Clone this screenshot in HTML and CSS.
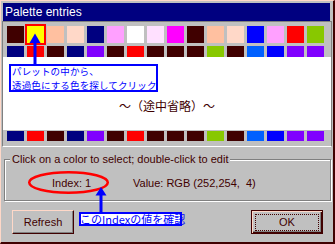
FILE: index.html
```html
<!DOCTYPE html>
<html lang="ja">
<head>
    <meta charset="UTF-8">
    <meta name="viewport" content="width=device-width, initial-scale=1.0">
    <title>Palette entries</title>
    <link rel="stylesheet" href="styles.css">
</head>
<body>
    <div class="window">
        <div class="title">Palette entries</div>

        <div class="palette">
            <div class="row">
                <i class="sw mr"></i><i class="sw ye"></i><i class="sw pc"></i><i class="sw lp"></i>
                <i class="sw nv"></i><i class="sw pk"></i><i class="sw wh"></i><i class="sw lk"></i>
                <i class="sw mg"></i><i class="sw mr"></i><i class="sw pc"></i><i class="sw lp"></i>
                <i class="sw bl"></i><i class="sw pk"></i><i class="sw rd"></i><i class="sw gr"></i>
            </div>
            <div class="row cut-top">
                <i class="sw nv"></i><i class="sw rd"></i><i class="sw mr"></i><i class="sw nv"></i>
                <i class="sw pu"></i><i class="sw mr"></i><i class="sw rd"></i><i class="sw mr"></i>
                <i class="sw mr"></i><i class="sw mr"></i><i class="sw gr"></i><i class="sw mr"></i>
                <i class="sw az"></i><i class="sw bl"></i><i class="sw pu"></i><i class="sw pu"></i>
            </div>
            <!-- 途中の行は省略 -->
            <div class="omitted">～（途中省略）～</div>
            <div class="row cut-bottom">
                <i class="sw nv"></i><i class="sw rd"></i><i class="sw mr"></i><i class="sw nv"></i>
                <i class="sw pu"></i><i class="sw mr"></i><i class="sw rd"></i><i class="sw mr"></i>
                <i class="sw mr"></i><i class="sw mr"></i><i class="sw gr"></i><i class="sw mr"></i>
                <i class="sw az"></i><i class="sw bl"></i><i class="sw pu"></i><i class="sw pu"></i>
            </div>
        </div>

        <div class="group">
            <span class="legend">Click on a color to select; double-click to edit</span>
            <div class="info">
                <span class="index">Index: 1</span>
                <span class="value">Value: RGB (252,254,  4)</span>
            </div>
        </div>

        <div class="buttons">
            <button class="btn">Refresh</button>
            <button class="btn btn-default"><span class="focus">OK</span></button>
        </div>

        <!-- 注釈 -->
        <div class="note note-pick">
            <div class="note-line">パレットの中から、</div>
            <div class="note-line">透過色にする色を探してクリック</div>
        </div>
        <div class="note note-index">このIndexの値を確認</div>

        <svg class="marks" width="335" height="244" viewBox="0 0 335 244">
            <rect x="26" y="25" width="19" height="19" fill="none" stroke="#ff0000" stroke-width="2"/>
            <rect x="33.5" y="42" width="3" height="23" fill="#0000ff"/>
            <polygon points="29.5,43 40.5,43 35,33.5" fill="#0000ff"/>
            <ellipse cx="68.5" cy="182.5" rx="39.3" ry="10.3" fill="none" stroke="#ff0000" stroke-width="2.5"/>
            <rect x="99.5" y="194" width="3" height="19" fill="#0000ff"/>
            <polygon points="95.5,195.5 106.5,195.5 101,187" fill="#0000ff"/>
        </svg>
    </div>
</body>
</html>
```

FILE: styles.css
```css
body {
    margin: 0;
    padding: 0;
}

.window {
    position: relative;
    width: 335px;
    height: 244px;
    box-sizing: border-box;
    background-color: #c0c0c0;
    border-top: 1px solid #ffd8c8;
    border-left: 1px solid #ffd8c8;
    border-right: 2px solid #400000;
    border-bottom: 2px solid #400000;
    padding: 2px 1px 0 1px;
    font-family: "Liberation Sans", Arial, sans-serif;
    font-size: 11px;
    color: #400000;
}

.title {
    height: 18px;
    line-height: 18px;
    margin: 0 2px 0 1px;
    padding-left: 2px;
    background-color: #000080;
    color: white;
    font-size: 12px;
}

/* palette list */
.palette {
    border: 1px solid #808080;
    border-bottom-color: #ffffff;
    padding: 4px 0 5px 0;
}

.row {
    display: flex;
    gap: 3px;
    padding-left: 4px;
}

.row + .row {
    margin-top: 3px;
}

.sw {
    display: block;
    width: 17px;
    height: 17px;
}

.cut-top .sw {
    height: 11px;
}

.cut-bottom {
    margin-top: 1px;
}

.cut-bottom .sw {
    height: 10px;
}

.omitted {
    height: 73px;
    box-sizing: border-box;
    padding-top: 41px;
    background-color: #ffffff;
    text-align: center;
    font-family: "Noto Sans CJK JP", sans-serif;
    font-size: 12px;
    line-height: 16px;
}

.mr { background-color: #400000; }
.ye { background-color: #ffff00; }
.pc { background-color: #ffc0a0; }
.lp { background-color: #ffd8c8; }
.nv { background-color: #000080; }
.pk { background-color: #ffa0ff; }
.wh { background-color: #ffffff; }
.lk { background-color: #ffe0ff; }
.mg { background-color: #ff00ff; }
.bl { background-color: #0000ff; }
.rd { background-color: #ff0000; }
.gr { background-color: #88c800; }
.pu { background-color: #8000ff; }
.az { background-color: #0060ff; }

/* group box */
.group {
    display: flex;
    flex-direction: column;
    align-items: flex-start;
    height: 42px;
    box-sizing: border-box;
    margin: 12px 1px 0 2px;
    border: 1px solid #808080;
    box-shadow: inset 1px 1px 0 #ffffff, 1px 1px 0 #ffffff;
}

.legend {
    margin: -7px 0 0 5px;
    padding: 0 2px;
    line-height: 13px;
    background-color: #c0c0c0;
}

.info {
    margin-top: 11px;
    padding-left: 47px;
    line-height: 13px;
    display: flex;
}

.index {
    width: 81px;
}

.value {
    white-space: pre;
}

/* buttons */
.buttons {
    display: flex;
    justify-content: space-between;
    margin-top: 9px;
    padding: 0 9px 0 10px;
}

.btn {
    height: 24px;
    width: 62px;
    padding: 0;
    background-color: #c0c0c0;
    color: #400000;
    font-family: "Liberation Sans", Arial, sans-serif;
    font-size: 11px;
    border-top: 1px solid #ffd8c8;
    border-left: 1px solid #ffd8c8;
    border-right: 1px solid #400000;
    border-bottom: 1px solid #400000;
    box-shadow: inset -1px -1px 0 #808080;
}

.btn-default {
    width: 72px;
    border: 1px solid #400000;
    box-shadow: inset 1px 1px 0 #ffd8c8, inset -1px -1px 0 #400000, inset -2px -2px 0 #808080;
}

.focus {
    display: block;
    margin: 0 3px;
    height: 15px;
    line-height: 15px;
    border: 1px dotted #400000;
}

/* annotations */
.note {
    position: absolute;
    box-sizing: border-box;
    box-shadow: inset 0 0 0 2px #0000ff;
    background-color: #ffffff;
    color: #0000ff;
    font-family: "Noto Sans CJK JP", sans-serif;
    white-space: nowrap;
}

.note-pick {
    left: 8px;
    top: 63px;
    width: 149px;
    height: 28px;
    padding-left: 3px;
    font-size: 9.5px;
    letter-spacing: 0.15px;
}

.note-line {
    height: 14px;
    line-height: 14px;
}

.note-index {
    left: 78px;
    top: 211px;
    width: 103px;
    height: 14px;
    padding-left: 1px;
    font-size: 11px;
    line-height: 14px;
}

.marks {
    position: absolute;
    left: -1px;
    top: -1px;
    pointer-events: none;
}
```
